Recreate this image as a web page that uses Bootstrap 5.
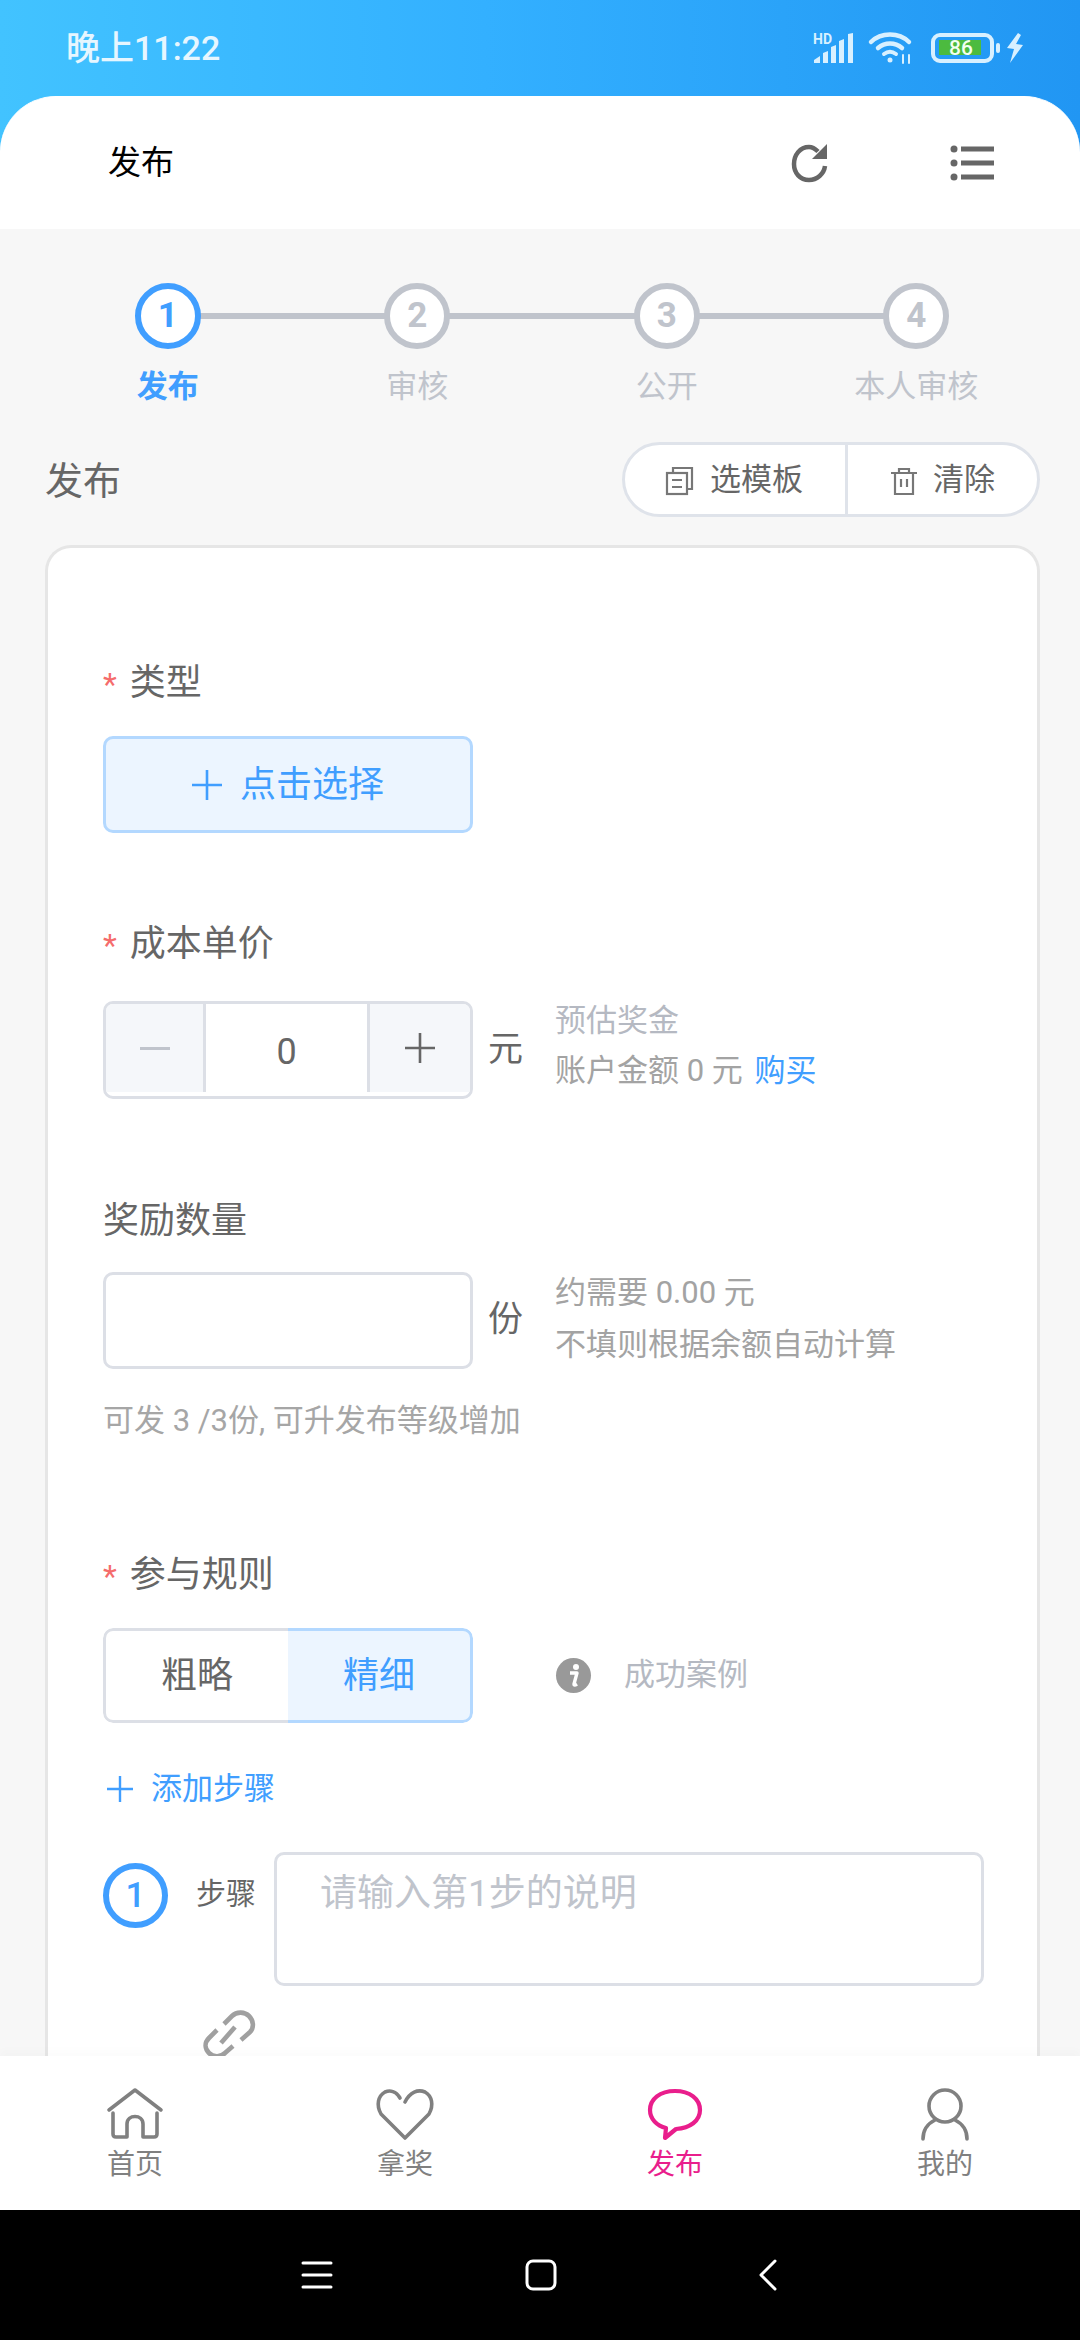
<!DOCTYPE html>
<html lang="zh-CN">
<head>
<meta charset="UTF-8" />
<title>发布</title>
<link href="https://cdn.jsdelivr.net/npm/bootstrap@5.3.0/dist/css/bootstrap.min.css" rel="stylesheet" />
<style>
    body { font-family: Roboto, "Noto Sans CJK SC", sans-serif; color: #666; background: #000; }
    svg { display: block; flex-shrink: 0; overflow: visible; }

    /* status bar + header */
    .top-wrap { background: linear-gradient(90deg, #42c3ff 0%, #33b0ff 45%, #2196f3 100%); }
    .status-row { height: 96px; padding: 0 56px 0 66px; }
    .status-time { font-size: 34px; font-weight: 500; color: #e6f6ff; line-height: 1; }
    .status-icons { gap: 14px; }
    .app-head { height: 133px; background: #fff; border-radius: 56px 56px 0 0; border-top: 1px solid #fff; padding: 0 86px 0 108px; }
    .app-title { font-size: 33px; color: #000; }
    .head-tools { gap: 119px; }

    /* main */
    .page-main { background: #f7f7f7; min-height: 0; padding: 54px 40px 0 45px; }
    .step-list { margin-left: -2px; margin-right: -1px; }
    .step-item { position: relative; text-align: center; }
    .step-dot { width: 66px; height: 66px; border: 6px solid #c0c4cc; border-radius: 50%; background: #fff; color: #c0c4cc; font-size: 35px; font-weight: 700; line-height: 54px; margin: 0 auto; position: relative; z-index: 1; }
    .step-item:not(:last-child)::after { content: ""; position: absolute; top: 30px; left: 50%; width: 100%; height: 6px; background: #c0c4cc; }
    .step-item .step-text { font-size: 31px; line-height: 40px; margin-top: 18px; color: #c0c4cc; }
    .step-item.is-on .step-dot { border-color: #409eff; color: #409eff; }
    .step-item.is-on .step-text { color: #409eff; font-weight: 700; }

    .head-row { margin-top: 35px; }
    .head-row h5 { font-size: 38px; font-weight: 400; color: #666; margin: 5px 0 0; }
    .pill-group { height: 75px; border: 3px solid #dfe3ea; border-radius: 38px; background: #fff; overflow: hidden; }
    .pill-btn { border: 0; border-radius: 0; font-size: 31px; color: #666; gap: 16px; padding: 2px 0 0 41px; height: 100%; }
    .pill-btn.first { width: 223px; border-right: 3px solid #dfe3ea; }
    .pill-btn.second { width: 189px; padding-left: 43px; }

    .form-panel { margin-top: 28px; background: #fff; border: 3px solid #e6e6e6; border-bottom: 0; border-radius: 26px 26px 0 0; padding: 110px 53px 0 55px; flex-grow: 1; min-height: 0; overflow: hidden; }
    .field-label { font-size: 36px; line-height: 50px; color: #666; margin-bottom: 27px; }
    .field-label i { font-style: normal; color: #f56c6c; font-size: 32px; margin-right: 13px; }
    .pick-btn { width: 370px; height: 97px; background: #ecf5ff; border: 3px solid #b3d8ff; border-radius: 10px; color: #409eff; font-size: 36px; gap: 18px; padding: 0; }

    .num-box { width: 370px; height: 98px; border: 3px solid #dcdfe6; border-radius: 10px; background: #fff; overflow: hidden; }
    .num-side { width: 100px; height: 88px; background: #f5f7fa; border: 0; border-radius: 0; padding: 0; }
    .num-side.left { border-right: 3px solid #dcdfe6; }
    .num-side.right { border-left: 3px solid #dcdfe6; width: 103px; }
    .num-val { font-size: 36px; color: #666; padding-top: 4px; }
    .unit-text { font-size: 35px; color: #666; margin: 0 32px 0 15px; width: 35px; }
    .tip-block { margin-top: -5px; }
    .tip-block.wide { margin-top: -5px; margin-bottom: -10px; }
    .tip-pale { font-size: 31px; line-height: 50px; color: #b5b9c2; }
    .tip-grey { font-size: 31px; line-height: 50px; color: #a3a3a3; }
    .tip-block.wide .tip-grey { line-height: 52px; }
    .tip-grey a { color: #409eff; text-decoration: none; margin-left: 4px; }
    .qty-input.form-control { width: 370px; height: 97px; border: 3px solid #dcdfe6; border-radius: 10px; box-shadow: none; }
    .hint-line { font-size: 31px; line-height: 44px; color: #a6a6a6; margin-top: 30px; }

    .mode-box { width: 370px; height: 95px; border-radius: 10px; overflow: hidden; }
    .mode-btn { width: 185px; height: 95px; font-size: 36px; color: #666; background: #fff; border: 3px solid #dcdfe6; border-right: 0; border-radius: 10px 0 0 10px; padding: 0; }
    .mode-btn.is-on { color: #409eff; background: #ecf5ff; border: 3px solid #b3d8ff; border-left: 0; border-radius: 0 10px 10px 0; }
    .case-link { margin-left: 83px; gap: 33px; font-size: 31px; color: #b5b9c2; }
    .add-step { margin-top: 44px; font-size: 31px; line-height: 44px; color: #409eff; gap: 18px; padding-left: 4px; }
    .step-row { margin-top: 41px; }
    .step-num { width: 65px; height: 65px; border: 6px solid #409eff; border-radius: 50%; color: #409eff; font-size: 35px; font-weight: 500; line-height: 53px; text-align: center; margin-top: 11px; flex-shrink: 0; }
    .step-cap { font-size: 30px; line-height: 40px; color: #666; margin: 22px 18px 0 28px; white-space: nowrap; }
    .step-area.form-control { height: 134px; border: 3px solid #dcdfe6; border-radius: 10px; font-size: 37px; line-height: 48px; padding: 15px 43px; resize: none; box-shadow: none; }
    .step-area::placeholder { color: #c0c4cc; opacity: 1; }
    .link-mark { margin: 23px 0 0 100px; }

    /* bottom */
    .tab-bar { height: 154px; background: #fff; position: relative; z-index: 2; box-shadow: 0 -6px 8px rgba(0, 0, 0, .015); }
    .tab-cell { flex: 1 1 0; padding-top: 32px; color: #808080; font-size: 28px; line-height: 40px; text-align: center; }
    .tab-cell svg { margin: 0 auto 5px; }
    .tab-cell.is-on { color: #e91e8c; }
    .sys-bar { height: 130px; background: #000; }
</style>
</head>
<body>
<div class="d-flex flex-column vh-100 overflow-hidden">

    <div class="top-wrap flex-shrink-0">
        <div class="status-row d-flex align-items-center justify-content-between">
            <div class="status-time">晚上11:22</div>
            <div class="status-icons d-flex align-items-center">
                <svg width="42" height="30" viewBox="0 0 42 30" fill="#d8f0ff">
                    <text x="0" y="11" font-size="14" font-weight="700" font-family="Roboto, sans-serif">HD</text>
                    <path d="M1 30v-3l6-4v7zM10 30V20l5-2v12zM18 30V14l5-2v18zM26 30V8l5-2v24zM35 30V1l5-1v30z"/>
                </svg>
                <svg width="44" height="32" viewBox="0 0 44 32" fill="none" stroke="#d8f0ff" stroke-width="4.5" stroke-linecap="round">
                    <path d="M2 10C12 0 30 0 40 10"/>
                    <path d="M9 16c7-6 17-6 24 0"/>
                    <path d="M15 22c4-3 8-3 12 0" stroke-width="4"/>
                    <circle cx="21" cy="28" r="2.5" fill="#d8f0ff" stroke="none"/>
                    <path d="M34 31v-8M40 31v-8" stroke-width="2"/>
                </svg>
                <svg width="70" height="30" viewBox="0 0 70 30" class="ms-1">
                    <rect x="2" y="2" width="59" height="26" rx="7" fill="none" stroke="#d8f0ff" stroke-width="4"/>
                    <rect x="8" y="7" width="42" height="15" fill="#4cbb3f"/>
                    <rect x="65" y="10" width="4" height="10" rx="2" fill="#d8f0ff"/>
                    <text x="30" y="22" text-anchor="middle" font-size="21" font-weight="500" fill="#f2fff0" font-family="Roboto, sans-serif">86</text>
                </svg>
                <svg width="18" height="30" viewBox="0 0 18 30" fill="#d8f0ff" style="margin-left:-9px">
                    <path d="M12 0 1 15l7 1-4 14L17 12l-7-1 5-9z"/>
                </svg>
            </div>
        </div>
        <div class="app-head d-flex align-items-center justify-content-between">
            <div class="app-title">发布</div>
            <div class="head-tools d-flex align-items-center">
                <svg width="40" height="38" viewBox="0 0 40 38" fill="none">
                    <path d="M27 7.5C24 4.5 21 3 18 3 9 3 3 11 3 20s6 16 15 16c8 0 15-6 16-14" stroke="#666" stroke-width="4.5"/>
                    <path d="M36 0v15H21z" fill="#666"/>
                </svg>
                <svg width="44" height="36" viewBox="0 0 44 36" fill="#666">
                    <circle cx="4" cy="4" r="3.5"/><circle cx="4" cy="18" r="3.5"/><circle cx="4" cy="32" r="3.5"/>
                    <rect x="11" y="1.5" width="33" height="5"/><rect x="11" y="15.5" width="33" height="5"/><rect x="11" y="29.5" width="33" height="5"/>
                </svg>
            </div>
        </div>
    </div>

    <div class="page-main flex-grow-1 d-flex flex-column overflow-hidden">
        <div class="row g-0 flex-shrink-0 step-list">
            <div class="col-3 step-item is-on"><div class="step-dot">1</div><div class="step-text">发布</div></div>
            <div class="col-3 step-item"><div class="step-dot">2</div><div class="step-text">审核</div></div>
            <div class="col-3 step-item"><div class="step-dot">3</div><div class="step-text">公开</div></div>
            <div class="col-3 step-item"><div class="step-dot">4</div><div class="step-text">本人审核</div></div>
        </div>

        <div class="head-row d-flex align-items-center justify-content-between flex-shrink-0">
            <h5>发布</h5>
            <div class="pill-group d-flex">
                <button type="button" class="btn pill-btn first d-flex align-items-center">
                    <svg width="28" height="28" viewBox="0 0 28 28" fill="none" stroke="#777" stroke-width="2.2">
                        <path d="M7 5V1h19v21h-4"/>
                        <rect x="1" y="6" width="20" height="21"/>
                        <path d="M6 13h10M6 20h10"/>
                    </svg>
                    选模板
                </button>
                <button type="button" class="btn pill-btn second d-flex align-items-center">
                    <svg width="26" height="28" viewBox="0 0 26 28" fill="none" stroke="#777" stroke-width="2.2">
                        <path d="M0 6h26M8 6V2h10v4"/>
                        <path d="M4 6v21h18V6"/>
                        <path d="M10 12v8M16 12v8"/>
                    </svg>
                    清除
                </button>
            </div>
        </div>

        <div class="form-panel">
            <div class="field-label"><i>*</i>类型</div>
            <button type="button" class="btn pick-btn d-flex align-items-center justify-content-center">
                <svg width="30" height="30" viewBox="0 0 30 30" stroke="#409eff" stroke-width="2.6"><path d="M15 0v30M0 15h30"/></svg>
                点击选择
            </button>

            <div class="field-label" style="margin-top:86px;margin-bottom:31px"><i>*</i>成本单价</div>
            <div class="d-flex align-items-start">
                <div class="num-box d-flex align-items-start flex-shrink-0">
                    <button type="button" class="btn num-side left d-flex align-items-center justify-content-center">
                        <svg width="30" height="3" viewBox="0 0 30 3" stroke="#c0c4cc" stroke-width="3"><path d="M0 1.5h30"/></svg>
                    </button>
                    <div class="num-val flex-grow-1 text-center align-self-center">0</div>
                    <button type="button" class="btn num-side right d-flex align-items-center justify-content-center">
                        <svg width="30" height="30" viewBox="0 0 30 30" stroke="#666" stroke-width="2.6"><path d="M15 0v30M0 15h30"/></svg>
                    </button>
                </div>
                <div class="unit-text align-self-center">元</div>
                <div class="tip-block">
                    <div class="tip-pale">预估奖金</div>
                    <div class="tip-grey">账户金额 0 元 <a href="#">购买</a></div>
                </div>
            </div>

            <div class="field-label" style="margin-top:97px;margin-bottom:26px">奖励数量</div>
            <div class="d-flex align-items-start">
                <input type="text" class="form-control qty-input flex-shrink-0" />
                <div class="unit-text align-self-center">份</div>
                <div class="tip-block wide">
                    <div class="tip-grey">约需要 0.00 元</div>
                    <div class="tip-grey">不填则根据余额自动计算</div>
                </div>
            </div>
            <div class="hint-line">可发 3 /3份, 可升发布等级增加</div>

            <div class="field-label" style="margin-top:107px"><i>*</i>参与规则</div>
            <div class="d-flex align-items-center">
                <div class="mode-box d-flex flex-shrink-0">
                    <button type="button" class="btn mode-btn">粗略</button>
                    <button type="button" class="btn mode-btn is-on">精细</button>
                </div>
                <div class="case-link d-flex align-items-center">
                    <svg width="35" height="35" viewBox="0 0 35 35">
                        <circle cx="17.5" cy="17.5" r="17.5" fill="#999"/>
                        <circle cx="20" cy="9" r="3" fill="#fff"/>
                        <path d="M14 15h7l-3 11q0 2 3 0" fill="none" stroke="#fff" stroke-width="3.4" stroke-linejoin="round"/>
                    </svg>
                    成功案例
                </div>
            </div>

            <div class="add-step d-flex align-items-center">
                <svg width="26" height="26" viewBox="0 0 26 26" stroke="#409eff" stroke-width="2.4"><path d="M13 0v26M0 13h26"/></svg>
                添加步骤
            </div>

            <div class="step-row d-flex align-items-start">
                <div class="step-num">1</div>
                <div class="step-cap">步骤</div>
                <textarea class="form-control step-area" placeholder="请输入第1步的说明"></textarea>
            </div>
            <svg class="link-mark" width="50" height="48" viewBox="-2 -3 50 48" fill="none" stroke="#a0a0a0" stroke-width="4.6">
                <path d="M19 12l8-8c5-5 13-4 17 0 5 5 5 12 1 16l-9 8"/>
                <path d="M12 18l-8 8c-5 5-4 11 0 15s11 5 16 0l8-7"/>
                <path d="M16 31 30 15"/>
            </svg>
        </div>
    </div>

    <div class="tab-bar d-flex flex-shrink-0">
        <div class="tab-cell">
            <svg width="56" height="52" viewBox="0 0 56 52" fill="none" stroke="#808080" stroke-width="3.6" stroke-linecap="round" stroke-linejoin="round">
                <path d="M2 22 28 2l26 20"/>
                <path d="M6 25v21q0 3 3 3h11V36c0-10 16-10 16 0v13h11q3 0 3-3V25"/>
            </svg>
            首页
        </div>
        <div class="tab-cell">
            <svg width="58" height="52" viewBox="0 0 58 52" fill="none" stroke="#808080" stroke-width="3.6" stroke-linecap="round" stroke-linejoin="round">
                <path d="M24 10C20 3 14 2 9 4 2 8 0 17 5 26l24 24 24-24c5-9 3-18-4-22-7-3-15 0-20 10"/>
            </svg>
            拿奖
        </div>
        <div class="tab-cell is-on">
            <svg width="56" height="52" viewBox="0 0 56 52" fill="none" stroke="#e91e8c" stroke-width="4.2" stroke-linejoin="round">
                <path d="M28 3C13 3 3 11 3 22c0 9 7 16 16 18l-1 10 11-9c14-1 24-8 24-19C53 11 43 3 28 3z"/>
            </svg>
            发布
        </div>
        <div class="tab-cell">
            <svg width="48" height="52" viewBox="0 0 48 52" fill="none" stroke="#808080" stroke-width="3.6" stroke-linecap="round">
                <circle cx="24" cy="18" r="16"/>
                <path d="M14 32C6 36 2 43 2 51M34 32c8 4 12 11 12 19"/>
            </svg>
            我的
        </div>
    </div>

    <div class="sys-bar d-flex align-items-center flex-shrink-0 position-relative">
        <svg width="32" height="30" viewBox="0 0 32 30" stroke="#fff" stroke-width="3" stroke-linecap="round" style="margin-left:301px"><path d="M2 3h28M2 15h28M2 27h28"/></svg>
        <svg width="32" height="32" viewBox="0 0 32 32" fill="none" stroke="#fff" stroke-width="3" style="margin-left:192px"><rect x="2" y="2" width="28" height="28" rx="6"/></svg>
        <svg width="18" height="32" viewBox="0 0 18 32" fill="none" stroke="#fff" stroke-width="3" stroke-linecap="round" stroke-linejoin="round" style="margin-left:202px"><path d="M16 2 2 16l14 14"/></svg>
    </div>
</div>
<script src="https://cdn.jsdelivr.net/npm/bootstrap@5.3.0/dist/js/bootstrap.bundle.min.js"></script>
</body>
</html>
